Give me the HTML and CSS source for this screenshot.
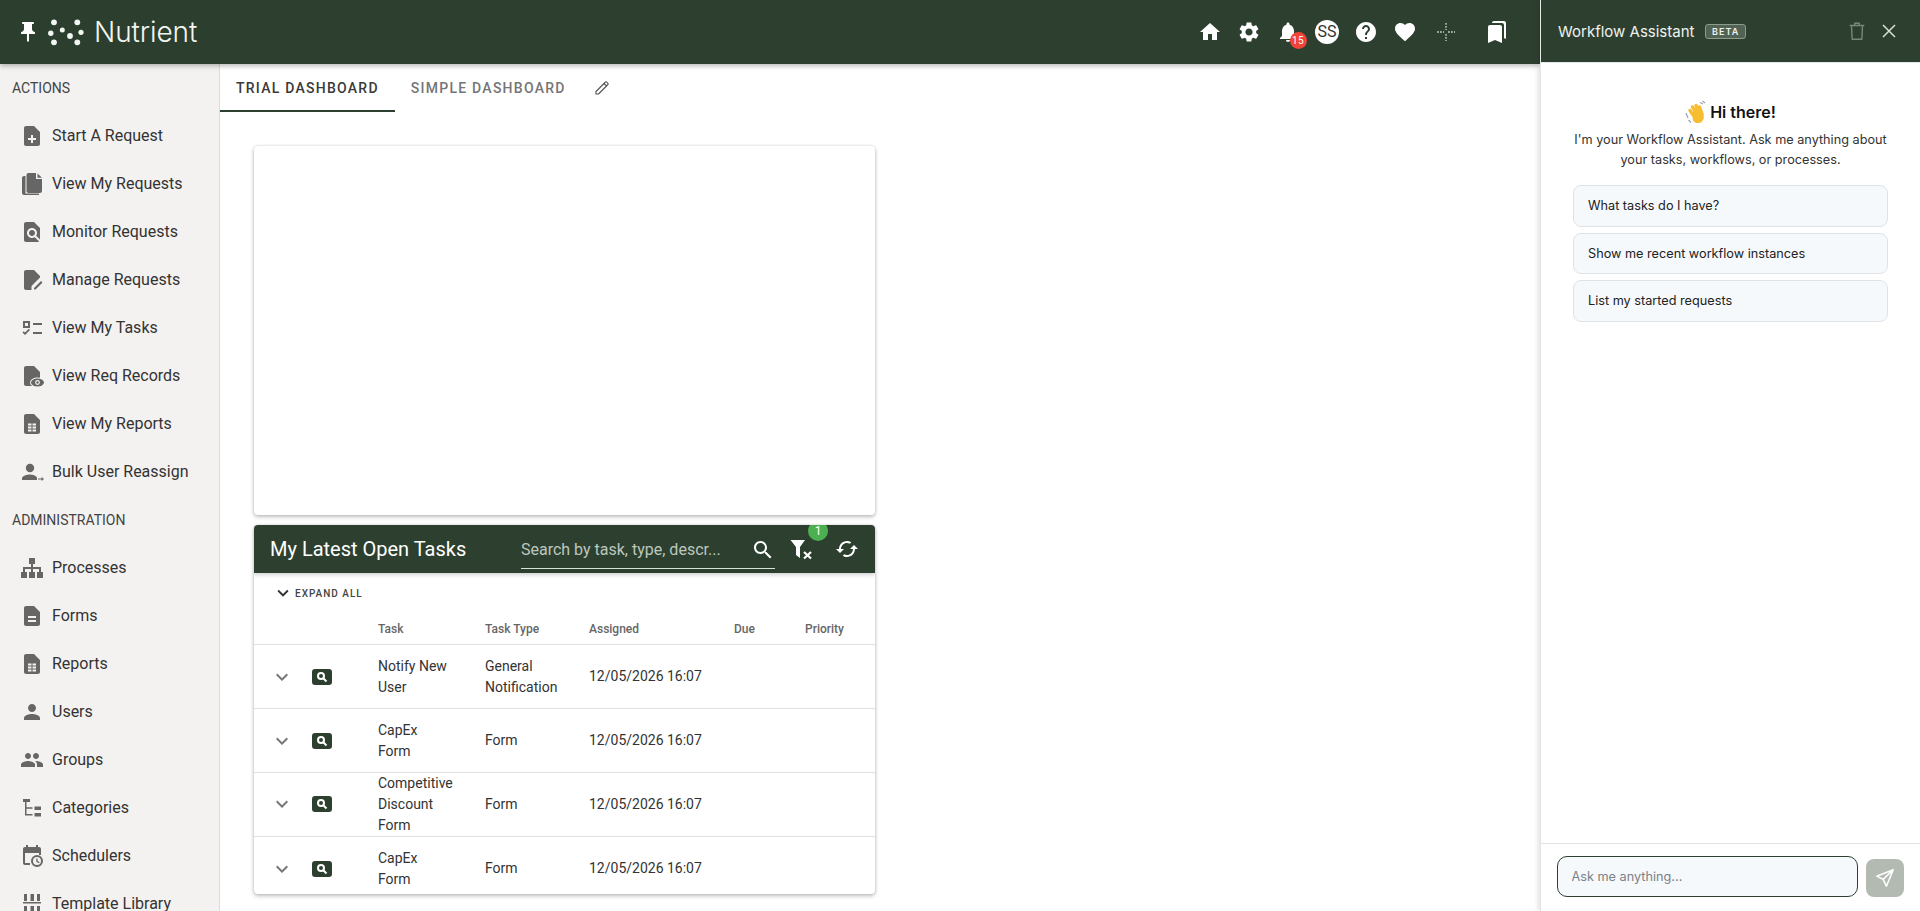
FILE: index.html
```html
<!DOCTYPE html>
<html lang="en">
<head>
<meta charset="utf-8">
<title>Nutrient Workflow</title>
<link rel="stylesheet" href="styles.css">
</head>
<body>
<svg class="sprite" aria-hidden="true">
  <symbol id="i-pin" viewBox="0 0 24 24"><path d="M16 9V4h1c.55 0 1-.45 1-1s-.45-1-1-1H7c-.55 0-1 .45-1 1s.45 1 1 1h1v5c0 1.66-1.34 3-3 3v2h5.97v7l1 1 1-1v-7H19v-2c-1.66 0-3-1.34-3-3z"/></symbol>
  <symbol id="i-home" viewBox="0 0 24 24"><path d="M10 20v-6h4v6h5v-8h3L12 3 2 12h3v8z"/></symbol>
  <symbol id="i-gear" viewBox="0 0 24 24"><path d="M19.14 12.94c.04-.3.06-.61.06-.94 0-.32-.02-.64-.07-.94l2.03-1.58c.18-.14.23-.41.12-.61l-1.92-3.32c-.12-.22-.37-.29-.59-.22l-2.39.96c-.5-.38-1.03-.7-1.62-.94l-.36-2.54c-.04-.24-.24-.41-.48-.41h-3.84c-.24 0-.43.17-.47.41l-.36 2.54c-.59.24-1.13.57-1.62.94l-2.39-.96c-.22-.08-.47 0-.59.22L2.74 8.87c-.12.21-.08.47.12.61l2.03 1.58c-.05.3-.09.63-.09.94s.02.64.07.94l-2.03 1.58c-.18.14-.23.41-.12.61l1.92 3.32c.12.22.37.29.59.22l2.39-.96c.5.38 1.03.7 1.62.94l.36 2.54c.05.24.24.41.48.41h3.84c.24 0 .44-.17.47-.41l.36-2.54c.59-.24 1.13-.56 1.62-.94l2.39.96c.22.08.47 0 .59-.22l1.92-3.32c.12-.22.07-.47-.12-.61l-2.01-1.58zM12 15.6c-1.98 0-3.6-1.62-3.6-3.6s1.62-3.6 3.6-3.6 3.6 1.62 3.6 3.6-1.62 3.6-3.6 3.6z"/></symbol>
  <symbol id="i-bell" viewBox="0 0 24 24"><path d="M12 22c1.1 0 2-.9 2-2h-4c0 1.1.89 2 2 2zm6-6v-5c0-3.07-1.64-5.64-4.5-6.32V4c0-.83-.67-1.5-1.5-1.5s-1.5.67-1.5 1.5v.68C7.63 5.36 6 7.92 6 11v5l-2 2v1h16v-1l-2-2z"/></symbol>
  <symbol id="i-help" viewBox="0 0 24 24"><path d="M12 2C6.48 2 2 6.48 2 12s4.48 10 10 10 10-4.48 10-10S17.52 2 12 2zm1 17h-2v-2h2v2zm2.07-7.75l-.9.92C13.45 12.9 13 13.5 13 15h-2v-.5c0-1.1.45-2.1 1.17-2.83l1.24-1.26c.37-.36.59-.86.59-1.41 0-1.1-.9-2-2-2s-2 .9-2 2H8c0-2.21 1.79-4 4-4s4 1.79 4 4c0 .88-.36 1.68-.93 2.25z"/></symbol>
  <symbol id="i-heart" viewBox="0 0 24 24"><path d="M12 21.35l-1.45-1.32C5.4 15.36 2 12.28 2 8.5 2 5.42 4.42 3 7.5 3c1.74 0 3.41.81 4.5 2.09C13.09 3.81 14.76 3 16.5 3 19.58 3 22 5.42 22 8.5c0 3.78-3.4 6.86-8.55 11.54L12 21.35z"/></symbol>
  <symbol id="i-cross" viewBox="0 0 24 24"><path d="M12 3v7M12 14v7M3 12h7M14 12h7" fill="none" stroke="currentColor" stroke-width="1.8" stroke-dasharray="1.8 1.2"/></symbol>
  <symbol id="i-bookmarks" viewBox="0 0 24 24"><path d="M19 18l2 1V3c0-1.1-.9-2-2-2H8.99C7.89 1 7 1.9 7 3h10c1.1 0 2 .9 2 2v13zM15 5H5c-1.1 0-2 .9-2 2v16l7-3 7 3V7c0-1.1-.9-2-2-2z"/></symbol>
  <symbol id="i-search" viewBox="0 0 24 24"><path d="M15.5 14h-.79l-.28-.27C15.41 12.59 16 11.11 16 9.5 16 5.91 13.09 3 9.5 3S3 5.91 3 9.5 5.91 16 9.5 16c1.61 0 3.09-.59 4.23-1.57l.27.28v.79l5 4.99L20.49 19l-4.99-5zm-6 0C7.01 14 5 11.99 5 9.5S7.01 5 9.5 5 14 7.01 14 9.5 11.99 14 9.5 14z"/></symbol>
  <symbol id="i-search-bold" viewBox="0 0 24 24"><circle cx="10" cy="10" r="6" fill="none" stroke="currentColor" stroke-width="4"/><path d="M14.500 14.500 21 21" fill="none" stroke="currentColor" stroke-width="4"/></symbol>
  <symbol id="i-chevron" viewBox="0 0 24 24"><path d="M16.59 8.59L12 13.17 7.41 8.59 6 10l6 6 6-6z"/></symbol>
  <symbol id="i-refresh" viewBox="0 0 24 24"><path d="M19 8l-4 4h3c0 3.31-2.69 6-6 6-1.01 0-1.97-.25-2.8-.7l-1.46 1.46C8.97 19.54 10.43 20 12 20c4.42 0 8-3.58 8-8h3l-4-4zM6 12c0-3.31 2.69-6 6-6 1.01 0 1.97.25 2.8.7l1.46-1.46C15.03 4.46 13.57 4 12 4c-4.42 0-8 3.58-8 8H1l4 4 4-4H6z"/></symbol>
  <symbol id="i-filter" viewBox="0 0 24 24"><path d="M1.500 3H16l-5 7v11l-4-3v-8z"/><path d="M15 15l7 6.500M22 15l-7 6.500" fill="none" stroke="currentColor" stroke-width="2.200"/></symbol>
  <symbol id="i-pencil" viewBox="0 0 24 24"><path d="M3 21v-3.750L15 5.250 18.750 9 6.750 21zM15 5.250l2.300-2.300a1 1 0 0 1 1.400 0l2.350 2.350a1 1 0 0 1 0 1.400L18.750 9" fill="none" stroke="currentColor" stroke-width="1.700" stroke-linejoin="round"/></symbol>
  <symbol id="i-note-add" viewBox="0 0 24 24"><path d="M14 2H6c-1.1 0-1.99.9-1.99 2L4 20c0 1.1.89 2 1.99 2H18c1.1 0 2-.9 2-2V8l-6-6zm2 14h-3v3h-2v-3H8v-2h3v-3h2v3h3v2z"/></symbol>
  <symbol id="i-copy" viewBox="0 0 24 24"><path d="M4 4h1.500v17.500H19V23H4c-1.100 0-2-.9-2-2V6c0-1.100.9-2 2-2zm4.500-3H16v6h6v12c0 1.100-.9 2-2 2H8.500c-1.100 0-2-.9-2-2V3c0-1.100.9-2 2-2zM17.500 1.500 22 5.800h-4.500z"/></symbol>
  <symbol id="i-find" viewBox="0 0 24 24"><path d="M20 19.59V8l-6-6H6c-1.1 0-1.99.9-1.99 2L4 20c0 1.1.89 2 1.99 2H18c.45 0 .85-.15 1.19-.4l-4.43-4.43c-.8.52-1.74.83-2.76.83-2.76 0-5-2.24-5-5s2.24-5 5-5 5 2.24 5 5c0 1.02-.31 1.96-.83 2.75L20 19.59zM9 13c0 1.66 1.34 3 3 3s3-1.34 3-3-1.34-3-3-3-3 1.34-3 3z"/></symbol>
  <symbol id="i-manage" viewBox="0 0 24 24"><path d="M6 2h8l6 6v1.500L11.500 18v4H6c-1.100 0-2-.9-2-2V4c0-1.100.9-2 2-2zM21 13l1.500 1.500-7 7H14V20z"/></symbol>
  <symbol id="i-tasks" viewBox="0 0 24 24"><path d="M3 5h7v7H3zM5 7v3h3V7zM13 7h9v2h-9zM13 16h9v2h-9zM5 19l-2.500-2.500 1.200-1.200L5 16.600l3.800-3.800L10 14z" fill-rule="evenodd"/></symbol>
  <symbol id="i-records" viewBox="0 0 24 24"><path d="M14 2H6c-1.100 0-2 .9-2 2v16c0 1.100.9 2 2 2h12c1.100 0 2-.9 2-2V8z"/><ellipse cx="17.500" cy="18.500" rx="7.500" ry="5" fill="#f3f2f1"/><ellipse cx="17.500" cy="18.500" rx="6.500" ry="4"/><circle cx="17.500" cy="18.500" r="2.400" fill="#f3f2f1"/><circle cx="17.500" cy="18.500" r="1.200"/></symbol>
  <symbol id="i-report" viewBox="0 0 24 24"><path fill-rule="evenodd" d="M14 2H6c-1.100 0-2 .9-2 2v16c0 1.100.9 2 2 2h12c1.100 0 2-.9 2-2V8zM8 11.500h3.500v2H8zM12.500 11.500H16v2h-3.500zM8 14.500h3.500v2H8zM12.500 14.500H16v2h-3.500zM8 17.500h3.500v2H8zM12.500 17.500H16v2h-3.500z"/></symbol>
  <symbol id="i-bulk" viewBox="0 0 24 24"><circle cx="10" cy="8" r="4.200"/><path d="M2 20v-1.500c0-2.700 5.300-4 8-4s6 1 7 3v2.500zM18 18.500h3.500v-1.500l2.500 2-2.500 2v-1.500H18z"/></symbol>
  <symbol id="i-sitemap" viewBox="0 0 24 24"><path d="M9 2h6v6h-2v3h8v5h2v6h-6v-6h2v-3h-6v3h2v6H9v-6h2v-3H5v3h2v6H1v-6h2v-5h8V8H9z"/></symbol>
  <symbol id="i-form" viewBox="0 0 24 24"><path d="M14 2H6c-1.100 0-1.990.9-1.990 2L4 20c0 1.100.89 2 1.990 2H18c1.100 0 2-.9 2-2V8l-6-6zm2 16H8v-2h8v2zm0-4H8v-2h8v2z"/></symbol>
  <symbol id="i-user" viewBox="0 0 24 24"><path d="M12 12c2.210 0 4-1.790 4-4s-1.790-4-4-4-4 1.790-4 4 1.790 4 4 4zm0 2c-2.670 0-8 1.340-8 4v2h16v-2c0-2.660-5.330-4-8-4z"/></symbol>
  <symbol id="i-group" viewBox="0 0 24 24"><path d="M16 11c1.660 0 2.990-1.340 2.990-3S17.660 5 16 5c-1.660 0-3 1.340-3 3s1.340 3 3 3zm-8 0c1.660 0 2.990-1.340 2.990-3S9.660 5 8 5C6.340 5 5 6.340 5 8s1.340 3 3 3zm0 2c-2.330 0-7 1.170-7 3.500V19h14v-2.500c0-2.330-4.670-3.500-7-3.500zm8 0c-.29 0-.62.02-.97.05 1.160.84 1.970 1.970 1.970 3.450V19h6v-2.500c0-2.330-4.670-3.500-7-3.500z"/></symbol>
  <symbol id="i-tree" viewBox="0 0 24 24"><path d="M3 3h7v3H6.500v5.200h6v1.500h-6V18h6v1.500H5V6H3zM14.500 10.500H21V14h-6.500zM14.500 17H21v3.500h-6.500z"/></symbol>
  <symbol id="i-schedule" viewBox="0 0 24 24"><path d="M5 3h1V1h2v2h8V1h2v2h1c1.100 0 2 .9 2 2v6h-2V9H5v10h5v2H5c-1.100 0-2-.9-2-2V5c0-1.100.9-2 2-2z"/><path d="M17 11a6 6 0 1 0 0 12 6 6 0 0 0 0-12zm0 2a4 4 0 1 1 0 8 4 4 0 0 1 0-8zm-.7 1.500v3.300l2.700 1.500.7-1.100-2.100-1.200v-2.500z"/></symbol>
  <symbol id="i-library" viewBox="0 0 24 24"><path d="M4 2h3v7H4zM10.500 2H14v7h-3.500zM17 2h3v7h-3zM3 10h18v1.500H3zM4 14h3v8H4zM10.500 14H14v8h-3.500zM17 14h3v8h-3z"/></symbol>
  <symbol id="i-trash" viewBox="0 0 24 24"><path d="M4 6h16M9.500 6V3.500h5V6M6 6l.7 15h10.600L18 6" fill="none" stroke="currentColor" stroke-width="1.500" stroke-linejoin="round"/></symbol>
  <symbol id="i-close" viewBox="0 0 24 24"><path d="M6 6l12 12M18 6L6 18" fill="none" stroke="currentColor" stroke-width="1.500"/></symbol>
  <symbol id="i-send" viewBox="0 0 24 24"><path d="M21 3 3 10l7 3.500L13.500 21zM10 13.500 21 3" fill="none" stroke="currentColor" stroke-width="1.700" stroke-linejoin="round"/></symbol>
</svg>

<div class="app">
  <div class="workspace">
    <header class="topbar">
      <div class="brand">
        <svg class="icon brand-pin"><use href="#i-pin"/></svg>
        <svg class="brand-mark" viewBox="0 0 36 28" aria-hidden="true">
          <circle cx="6" cy="4.300" r="2.900"/><circle cx="29.300" cy="4.300" r="2.900"/><circle cx="2.800" cy="15.300" r="2.700"/><circle cx="14.300" cy="12" r="2.500"/><circle cx="22" cy="18" r="2.900"/><circle cx="33" cy="14.300" r="2.600"/><circle cx="6" cy="24.300" r="2.900"/><circle cx="29.300" cy="24.300" r="2.900"/>
        </svg>
        <span class="brand-name">Nutrient</span>
      </div>
      <nav class="top-actions">
        <span class="top-item"><svg class="icon"><use href="#i-home"/></svg></span>
        <span class="top-item"><svg class="icon"><use href="#i-gear"/></svg></span>
        <span class="top-item"><svg class="icon"><use href="#i-bell"/></svg><span class="bell-badge">15</span></span>
        <span class="top-item"><span class="avatar">SS</span></span>
        <span class="top-item"><svg class="icon"><use href="#i-help"/></svg></span>
        <span class="top-item"><svg class="icon"><use href="#i-heart"/></svg></span>
        <span class="top-item top-item-muted"><svg class="icon"><use href="#i-cross"/></svg></span>
        <span class="top-item top-item-last"><svg class="icon"><use href="#i-bookmarks"/></svg></span>
      </nav>
    </header>

    <div class="body-row">
      <aside class="sidebar">
        <div class="nav-heading">Actions</div>
        <a class="nav-row"><svg class="icon"><use href="#i-note-add"/></svg>Start A Request</a>
        <a class="nav-row"><svg class="icon"><use href="#i-copy"/></svg>View My Requests</a>
        <a class="nav-row"><svg class="icon"><use href="#i-find"/></svg>Monitor Requests</a>
        <a class="nav-row"><svg class="icon"><use href="#i-manage"/></svg>Manage Requests</a>
        <a class="nav-row"><svg class="icon"><use href="#i-tasks"/></svg>View My Tasks</a>
        <a class="nav-row"><svg class="icon"><use href="#i-records"/></svg>View Req Records</a>
        <a class="nav-row"><svg class="icon"><use href="#i-report"/></svg>View My Reports</a>
        <a class="nav-row"><svg class="icon"><use href="#i-bulk"/></svg>Bulk User Reassign</a>
        <div class="nav-heading">Administration</div>
        <a class="nav-row"><svg class="icon"><use href="#i-sitemap"/></svg>Processes</a>
        <a class="nav-row"><svg class="icon"><use href="#i-form"/></svg>Forms</a>
        <a class="nav-row"><svg class="icon"><use href="#i-report"/></svg>Reports</a>
        <a class="nav-row"><svg class="icon"><use href="#i-user"/></svg>Users</a>
        <a class="nav-row"><svg class="icon"><use href="#i-group"/></svg>Groups</a>
        <a class="nav-row"><svg class="icon"><use href="#i-tree"/></svg>Categories</a>
        <a class="nav-row"><svg class="icon"><use href="#i-schedule"/></svg>Schedulers</a>
        <a class="nav-row"><svg class="icon"><use href="#i-library"/></svg>Template Library</a>
      </aside>

      <main class="main">
        <div class="tabs">
          <a class="tab tab-active">Trial Dashboard</a>
          <a class="tab">Simple Dashboard</a>
          <svg class="icon tab-edit"><use href="#i-pencil"/></svg>
        </div>
        <div class="dashboard">
          <section class="card"></section>
          <section class="card">
            <div class="toolbar">
              <h2 class="toolbar-title">My Latest Open Tasks</h2>
              <div class="search">
                <input class="search-input" type="text" placeholder="Search by task, type, descr...">
                <svg class="icon"><use href="#i-search"/></svg>
              </div>
              <span class="tool-btn tool-btn-filter"><svg class="icon"><use href="#i-filter"/></svg><span class="filter-badge">1</span></span>
              <span class="tool-btn"><svg class="icon"><use href="#i-refresh"/></svg></span>
            </div>
            <div class="expand-all"><svg class="icon"><use href="#i-chevron"/></svg>Expand All</div>
            <table class="tasks">
              <colgroup>
                <col class="c-exp"><col class="c-view"><col class="c-task"><col class="c-type"><col class="c-date"><col class="c-due"><col class="c-pri">
              </colgroup>
              <thead>
                <tr><th></th><th></th><th>Task</th><th>Task Type</th><th>Assigned</th><th>Due</th><th>Priority</th></tr>
              </thead>
              <tbody>
                <tr>
                  <td class="cell-exp"><svg class="icon"><use href="#i-chevron"/></svg></td>
                  <td><span class="view-btn"><svg class="icon"><use href="#i-search-bold"/></svg></span></td>
                  <td class="cell-task">Notify New User</td><td>General Notification</td><td>12/05/2026 16:07</td><td></td><td></td>
                </tr>
                <tr>
                  <td class="cell-exp"><svg class="icon"><use href="#i-chevron"/></svg></td>
                  <td><span class="view-btn"><svg class="icon"><use href="#i-search-bold"/></svg></span></td>
                  <td class="cell-task">CapEx<br>Form</td><td>Form</td><td>12/05/2026 16:07</td><td></td><td></td>
                </tr>
                <tr class="row-tall">
                  <td class="cell-exp"><svg class="icon"><use href="#i-chevron"/></svg></td>
                  <td><span class="view-btn"><svg class="icon"><use href="#i-search-bold"/></svg></span></td>
                  <td class="cell-task">Competitive Discount Form</td><td>Form</td><td>12/05/2026 16:07</td><td></td><td></td>
                </tr>
                <tr>
                  <td class="cell-exp"><svg class="icon"><use href="#i-chevron"/></svg></td>
                  <td><span class="view-btn"><svg class="icon"><use href="#i-search-bold"/></svg></span></td>
                  <td class="cell-task">CapEx<br>Form</td><td>Form</td><td>12/05/2026 16:07</td><td></td><td></td>
                </tr>
              </tbody>
            </table>
          </section>
        </div>
      </main>
    </div>
  </div>

  <aside class="assistant">
    <header class="assistant-head">
      <span class="assistant-title">Workflow Assistant</span>
      <span class="beta">BETA</span>
      <svg class="icon assistant-trash"><use href="#i-trash"/></svg>
      <svg class="icon assistant-close"><use href="#i-close"/></svg>
    </header>
    <div class="assistant-body">
      <h3 class="hello">
        <svg class="wave" viewBox="0 0 22 24" aria-hidden="true">
          <path class="wave-lines" d="M1 13l2 5M3.500 20l2.500 2.500M15 2.500l3 1.500M17.500 1l2.500 2"/>
          <path class="wave-hand" d="M5 10.500l5 7M7.500 7l5.500 8M11 5.500l4.500 8M14.500 7l2.500 7"/>
          <path class="wave-palm" d="M7 12l7-3 4 4.500c1.500 3 1 6-1 8-3 2.500-7 2-9-1z"/>
        </svg>
        Hi there!
      </h3>
      <p class="intro">I'm your Workflow Assistant. Ask me anything about your tasks, workflows, or processes.</p>
      <div class="prompts">
        <button class="prompt">What tasks do I have?</button>
        <button class="prompt">Show me recent workflow instances</button>
        <button class="prompt">List my started requests</button>
      </div>
    </div>
    <footer class="composer">
      <input class="composer-input" type="text" placeholder="Ask me anything...">
      <span class="send"><svg class="icon"><use href="#i-send"/></svg></span>
    </footer>
  </aside>
</div>
</body>
</html>
```

FILE: styles.css
```css
* { box-sizing: border-box; }

html, body {
  margin: 0;
  height: 100%;
  overflow: hidden;
  background: #fff;
  font-family: Roboto, "Liberation Sans", sans-serif;
  color: #333;
}

.sprite { display: none; }

.icon {
  width: 24px;
  height: 24px;
  fill: currentColor;
  flex: none;
  display: block;
}

.app { display: flex; height: 911px; }

.workspace {
  flex: 1;
  min-width: 0;
  display: flex;
  flex-direction: column;
}

/* Top bar */
.topbar {
  height: 64px;
  flex: none;
  display: flex;
  align-items: center;
  background: #2d4030;
  color: #fff;
  box-shadow: 0 2px 5px rgba(0, 0, 0, .28);
  position: relative;
  z-index: 2;
}

.brand {
  width: 220px;
  height: 64px;
  flex: none;
  display: flex;
  align-items: center;
  padding-left: 16px;
  background: #2c3f2f;
}

.brand-mark { width: 36px; height: 28px; margin-left: 8px; fill: #f2f6f2; flex: none; }

.brand-name {
  margin-left: 10px;
  font-family: Inter, sans-serif;
  font-size: 28px;
  font-weight: 300;
  letter-spacing: -.1px;
  color: #f2f6f2;
}

.top-actions { margin-left: auto; padding-right: 23.5px; display: flex; align-items: center; }

.top-item {
  position: relative;
  width: 39px;
  height: 64px;
  display: flex;
  align-items: center;
  justify-content: center;
}

.top-item-muted { margin-left: 2px; color: #9ab09b; }
.top-item-last { margin-left: 12px; }

.bell-badge {
  position: absolute;
  left: 21px;
  top: 31.5px;
  width: 17px;
  height: 17px;
  border-radius: 50%;
  background: #f04438;
  color: #fff;
  font-size: 10px;
  line-height: 17px;
  letter-spacing: .5px;
  text-align: center;
}

.avatar {
  width: 24px;
  height: 24px;
  border-radius: 50%;
  background: #fff;
  color: #333;
  font-size: 16px;
  line-height: 24px;
  text-align: center;
}

/* Sidebar */
.body-row { flex: 1; min-height: 0; display: flex; }

.sidebar {
  width: 220px;
  flex: none;
  overflow: hidden;
  background: #f3f2f1;
  border-right: 1px solid #dcdcdc;
}

.nav-heading {
  height: 48px;
  padding-left: 12px;
  display: flex;
  align-items: center;
  font-size: 14px;
  text-transform: uppercase;
  color: #444;
}

.nav-row {
  height: 48px;
  padding-left: 20px;
  padding-bottom: 1px;
  display: flex;
  align-items: center;
  gap: 8px;
  font-size: 16px;
  color: #333;
  white-space: nowrap;
}

.nav-row .icon { color: #666; }

/* Tabs */
.main { flex: 1; min-width: 0; overflow: hidden; }

.tabs { height: 48px; display: flex; align-items: center; }

.tab {
  height: 48px;
  padding: 2px 16px 0;
  display: flex;
  align-items: center;
  font-size: 14px;
  font-weight: 500;
  letter-spacing: 1.25px;
  text-transform: uppercase;
  color: #757575;
  border-bottom: 2px solid transparent;
}

.tab-active { padding-top: 1px; color: #3a3a3a; border-bottom-color: #2d4030; }

.tab-edit { width: 16px; height: 16px; margin-left: 12px; color: #555; }

/* Cards */
.dashboard {
  padding: 34px 0 0 34px;
  display: flex;
  flex-direction: column;
  gap: 10px;
}

.card {
  width: 621px;
  height: 369px;
  flex: none;
  background: #fff;
  border-radius: 4px;
  overflow: hidden;
  box-shadow: 0 2px 4px rgba(0, 0, 0, .24), 0 0 3px rgba(0, 0, 0, .14);
}

.toolbar {
  position: relative;
  height: 48px;
  padding-right: 8px;
  display: flex;
  align-items: center;
  background: #2d4030;
  color: #fff;
  box-shadow: 0 2px 4px rgba(0, 0, 0, .18);
}

.toolbar-title {
  margin: 0 auto 0 16px;
  font-size: 20px;
  font-weight: 400;
  white-space: nowrap;
}

.search {
  width: 254px;
  height: 38px;
  display: flex;
  align-items: center;
  border-bottom: 1px solid #d9e2d9;
  margin-right: 5.5px;
  margin-top: 2px;
}

.search-input {
  flex: 1;
  min-width: 0;
  border: 0;
  outline: 0;
  padding: 0;
  background: transparent;
  font: 400 16px Roboto, sans-serif;
  color: #fff;
}

.search-input::placeholder { color: #bcc7bd; opacity: 1; }

.tool-btn {
  position: relative;
  width: 40px;
  height: 40px;
  display: flex;
  align-items: center;
  justify-content: center;
}

.tool-btn-filter { margin-right: 6.5px; }

.filter-badge {
  position: absolute;
  left: 27.5px;
  top: -8px;
  width: 20px;
  height: 20px;
  border-radius: 50%;
  background: #4caf50;
  color: #fff;
  font-size: 12px;
  line-height: 20px;
  text-align: center;
}

/* Task table */
.expand-all {
  height: 40px;
  padding-left: 18px;
  display: flex;
  align-items: center;
  gap: 1px;
  font-size: 10px;
  font-weight: 500;
  letter-spacing: 1px;
  text-transform: uppercase;
  color: #444;
}

.expand-all .icon { width: 22px; height: 22px; color: #333; }

.tasks { width: 621px; table-layout: fixed; border-collapse: collapse; }

.c-exp { width: 46px; }
.c-view { width: 78px; }
.c-task { width: 107px; }
.c-type { width: 104px; }
.c-date { width: 145px; }
.c-due { width: 71px; }
.c-pri { width: 70px; }

.tasks th {
  height: 31px;
  padding: 2px 0 0;
  text-align: left;
  font-size: 12px;
  font-weight: 500;
  color: #666;
  border-bottom: 1px solid #e0e0e0;
}

.tasks td {
  height: 64px;
  padding: 1px 8px 0 0;
  font-size: 14px;
  line-height: 21px;
  color: #333;
  border-bottom: 1px solid #e0e0e0;
}

.tasks td.cell-task { padding-right: 22px; }
.tasks .row-tall td { padding-top: 0; }
.tasks td.cell-exp { padding-left: 16px; color: #777; overflow: visible; }
.cell-exp .icon { margin-right: -8px; }

.view-btn {
  width: 20px;
  height: 16px;
  margin-left: 12px;
  display: flex;
  align-items: center;
  justify-content: center;
  border-radius: 3px;
  background: #2d4030;
  color: #fff;
}

.view-btn .icon { width: 12px; height: 12px; }

/* Assistant panel */
.assistant {
  width: 380px;
  flex: none;
  display: flex;
  flex-direction: column;
  background: #fff;
  border-left: 1px solid #e4e8e4;
  box-shadow: -2px 0 5px rgba(0, 0, 0, .12);
  position: relative;
  z-index: 3;
  font-family: Inter, "Liberation Sans", sans-serif;
}

.assistant-head {
  height: 63px;
  flex: none;
  padding: 0 19px 0 17px;
  display: flex;
  align-items: center;
  background: #2d4030;
  border-bottom: 1px solid #dfe8ea;
  color: #eef2ee;
}

.assistant-title { font-size: 15px; white-space: nowrap; }

.beta {
  margin-left: 11px;
  padding: 0 5.5px;
  height: 15px;
  display: flex;
  align-items: center;
  border: 1px solid #8b9b8c;
  border-radius: 3px;
  background: rgba(255, 255, 255, .18);
  font-size: 9px;
  font-weight: 600;
  letter-spacing: 1.1px;
}

.assistant-trash { width: 22px; height: 22px; margin-left: auto; color: #748a76; }
.assistant-close { margin-left: 9px; color: #d8e0d8; }

.assistant-body { flex: 1; min-height: 0; padding: 37px 32px 0; }

.hello {
  margin: 0;
  height: 24px;
  display: flex;
  align-items: center;
  justify-content: center;
  gap: 3px;
  font-size: 16px;
  font-weight: 600;
  color: #111;
}

.wave { width: 22px; height: 24px; flex: none; }
.wave-lines { fill: none; stroke: #9aa2aa; stroke-width: 1.2; }
.wave-hand { fill: none; stroke: #f7bd30; stroke-width: 3.4; stroke-linecap: round; }
.wave-palm { fill: #f7bd30; }

.intro {
  margin: 6px 0 0;
  font-size: 12.7px;
  line-height: 20px;
  color: #333;
  text-align: center;
}

.prompts { margin-top: 15px; display: flex; flex-direction: column; gap: 6px; }

.prompt {
  height: 41.5px;
  padding: 0 14px;
  text-align: left;
  font: 400 12.7px Inter, sans-serif;
  color: #222;
  background: #f6f9fc;
  border: 1px solid #dfe3e8;
  border-radius: 8px;
}

.composer {
  height: 68px;
  flex: none;
  padding: 12px 16px 14px;
  display: flex;
  align-items: flex-end;
  gap: 8px;
  border-top: 1px solid #e2e2e2;
}

.composer-input {
  flex: 1;
  min-width: 0;
  height: 41px;
  padding: 0 13.5px;
  border: 1.5px solid #2d4030;
  border-radius: 10px;
  outline: 0;
  background: #f5f9fb;
  font: 400 12.7px Inter, sans-serif;
}

.composer-input::placeholder { color: #7b8188; opacity: 1; }

.send {
  width: 38px;
  height: 38px;
  flex: none;
  display: flex;
  align-items: center;
  justify-content: center;
  border-radius: 8px;
  background: #b2bab2;
  color: #fff;
}

.send .icon { width: 22px; height: 22px; }
```
